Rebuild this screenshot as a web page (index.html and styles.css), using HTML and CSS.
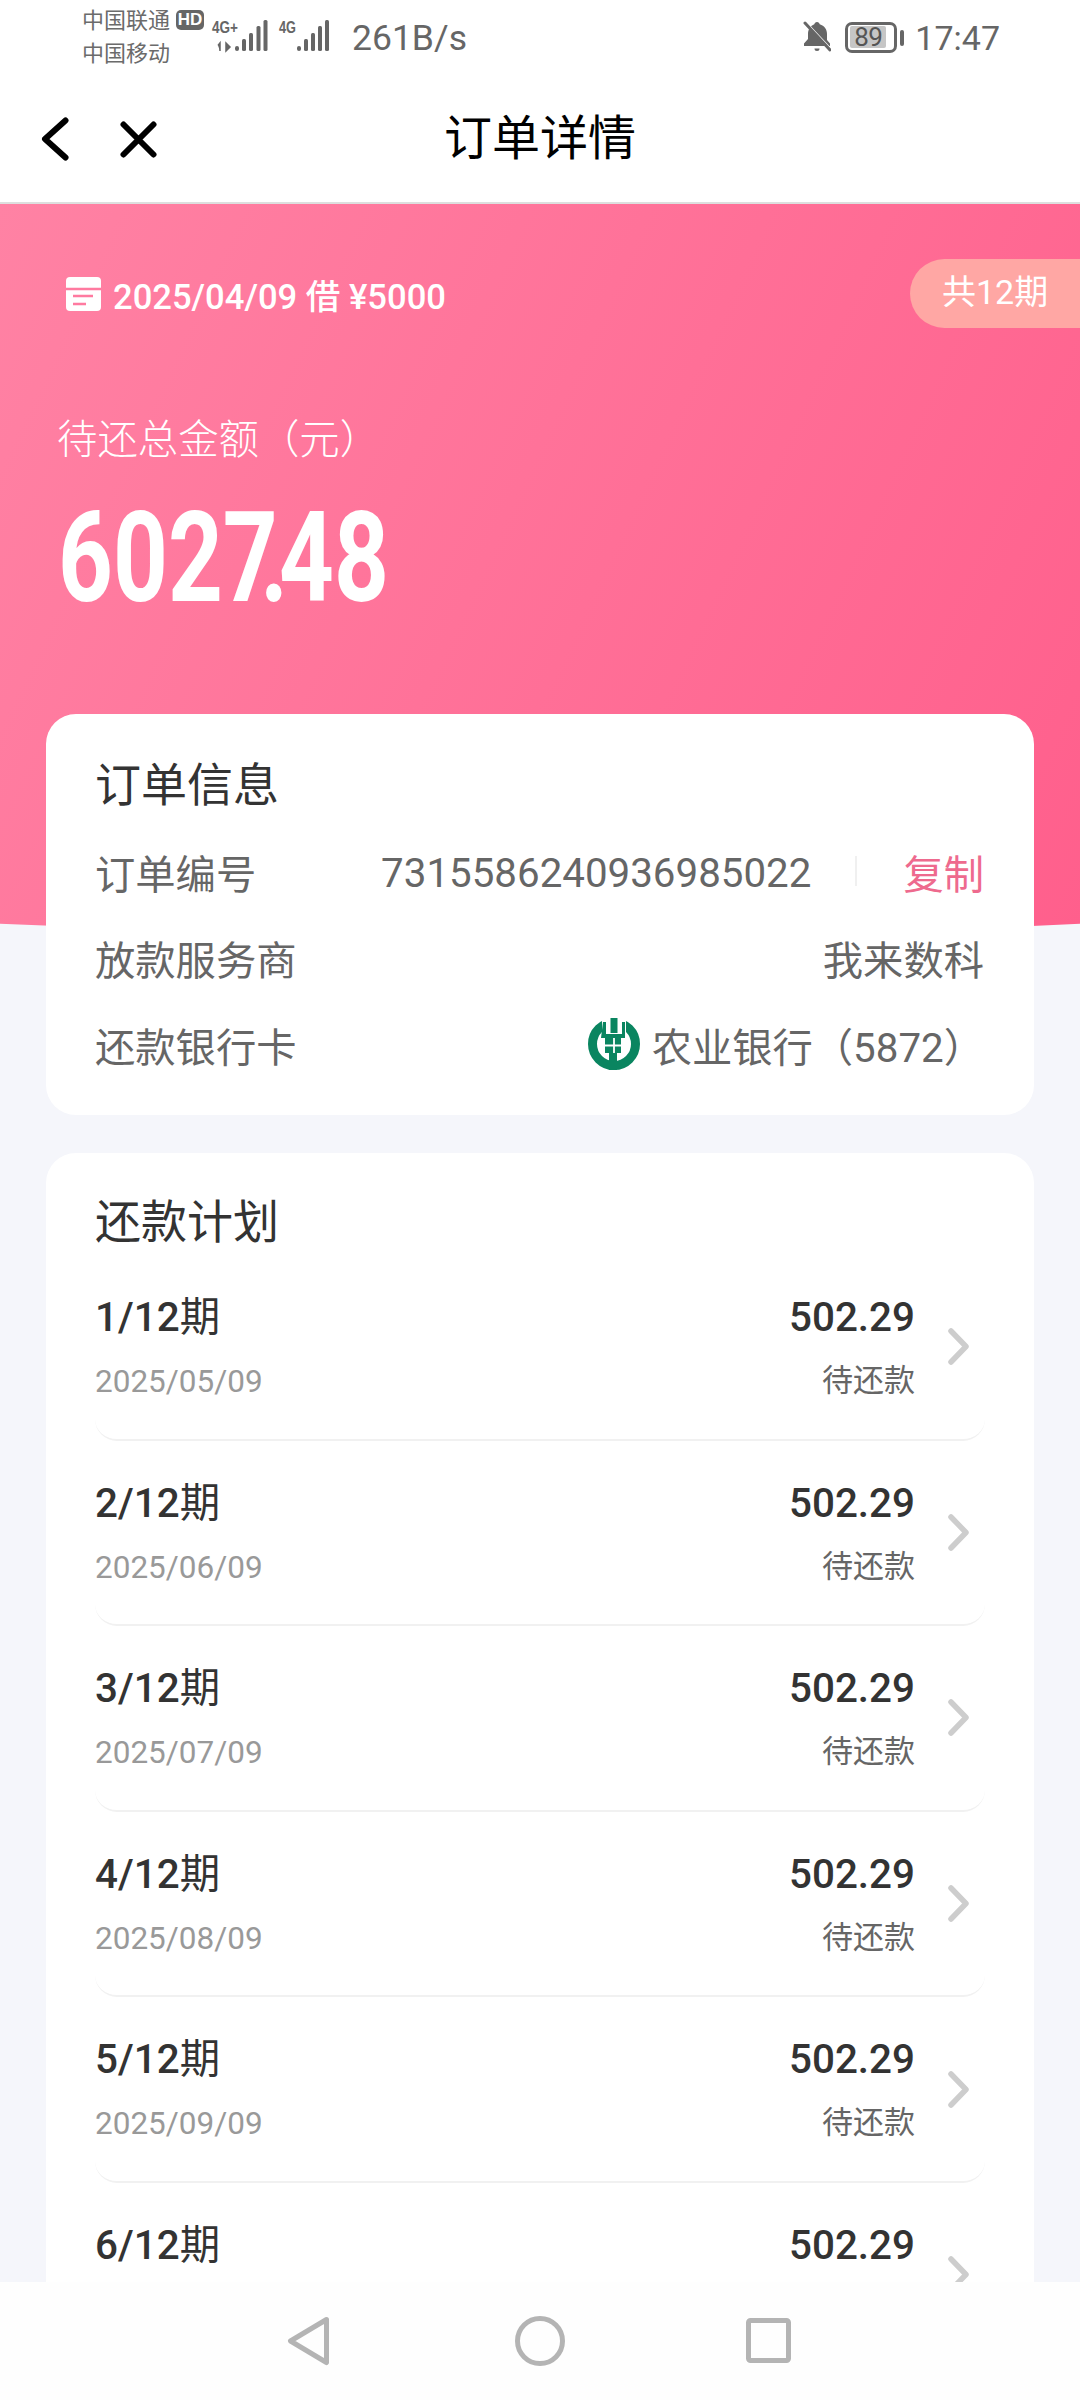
FILE: index.html
```html
<!DOCTYPE html>
<html lang="zh-CN">
<head>
<meta charset="utf-8">
<title>订单详情</title>
<link rel="stylesheet" href="styles.css">
</head>
<body>
<div class="screen">
  <header class="top">
    <div class="status">
      <div class="carriers">
        <div class="carrier">中国联通<span class="hd">HD</span></div>
        <div class="carrier">中国移动</div>
      </div>
      <svg class="signal" viewBox="205 15 130 40" width="130" height="40">
        <text class="sig-text" x="212" y="33" textLength="26" lengthAdjust="spacingAndGlyphs">4G+</text>
        <path class="sig-arrow" d="M220 51v-8l-2 2.5M226 43v8l4-4z"/>
        <rect class="sig-bar" x="235" y="46" width="4" height="5" rx="2"/>
        <rect class="sig-bar" x="242" y="39" width="4" height="12" rx="1.5"/>
        <rect class="sig-bar" x="249" y="33" width="4" height="18" rx="1.5"/>
        <rect class="sig-bar" x="256.500" y="26" width="4" height="25" rx="1.5"/>
        <rect class="sig-bar" x="263.500" y="20" width="4" height="31" rx="1.5"/>
        <text class="sig-text" x="279" y="33" textLength="17" lengthAdjust="spacingAndGlyphs">4G</text>
        <rect class="sig-bar" x="297" y="46" width="4" height="5" rx="2"/>
        <rect class="sig-bar" x="304" y="39" width="4" height="12" rx="1.5"/>
        <rect class="sig-bar" x="311" y="33" width="4" height="18" rx="1.5"/>
        <rect class="sig-bar" x="318" y="26" width="4" height="25" rx="1.5"/>
        <rect class="sig-bar" x="325" y="20" width="4" height="31" rx="1.5"/>
      </svg>
      <span class="speed">261B/s</span>
      <span class="grow"></span>
      <svg class="bell" viewBox="0 0 28 32" width="28" height="32">
        <path class="bell-body" d="M14 1c1.500 0 2.500 1 2.700 2.300C21.500 4.700 24 8.700 24 13v6l3 3.500V25H1v-2.500L5 18v-5c0-4.300 2.500-8.300 6.300-9.700C11.500 2 12.500 1 14 1z"/>
        <path class="bell-clap" d="M11.500 27.500h5a2.500 2.500 0 0 1-5 0z"/>
        <path class="bell-gap" d="M0 -1L28 29"/>
        <path class="bell-slash" d="M2 2L27 29"/>
      </svg>
      <div class="battery"><div class="battery-level">89</div></div>
      <span class="battery-nub"></span>
      <span class="clock">17:47</span>
    </div>
    <nav class="nav">
      <div class="nav-left">
        <svg class="nav-back" viewBox="0 0 28 44" width="28" height="44"><path d="M24.500 3.500L4 22l20.500 18.500"/></svg>
        <svg class="nav-close" viewBox="0 0 37 37" width="37" height="37"><path d="M3.500 3.500l30 30M33.500 3.500l-30 30"/></svg>
      </div>
      <h1 class="nav-title">订单详情</h1>
      <div></div>
    </nav>
  </header>

  <main class="content">
    <section class="hero">
      <div class="hero-top">
        <div class="loan">
          <svg class="loan-icon" viewBox="0 0 35 34" width="35" height="34">
            <rect class="loan-card" width="35" height="34" rx="4"/>
            <path class="loan-cut" d="M0 12h35M7 19h20M7 27h13"/>
          </svg>
          <span>2025/04/09 借 ¥5000</span>
        </div>
        <div class="periods">共12期</div>
      </div>
      <div class="hero-label">待还总金额（元）</div>
      <div class="hero-amount">602<span class="amount-seven">7</span><span class="amount-dot">.</span>48</div>
    </section>

    <section class="card card-info">
      <h2 class="card-title info-title">订单信息</h2>
      <div class="info-row">
        <span>订单编号</span>
        <div class="info-value">
          <span class="order-no">7315586240936985022</span>
          <i class="divider"></i>
          <span class="copy">复制</span>
        </div>
      </div>
      <div class="info-row">
        <span>放款服务商</span>
        <div class="info-value"><span>我来数科</span></div>
      </div>
      <div class="info-row">
        <span>还款银行卡</span>
        <div class="info-value bank">
          <svg class="bank-logo" viewBox="0 0 52 52" width="52" height="52">
            <circle class="bank-ring" cx="26" cy="26" r="21.500"/>
            <rect class="bank-cut" x="14" y="0" width="24" height="19"/>
            <path class="bank-green" d="M22.500 0h7v15h-7zM15 4h3v12h16V4h3v16h-4v15h-4v17h-8V35h-4V20h-4z"/>
            <path class="bank-lines" d="M17 27.500h18M26 20v15"/>
          </svg>
          <span>农业银行（5872）</span>
        </div>
      </div>
    </section>

    <section class="card card-plan">
      <h2 class="card-title plan-title">还款计划</h2>
      <div class="plan-row">
        <div class="plan-left"><div class="plan-num">1/12<span class="plan-unit">期</span></div><div class="plan-date">2025/05/09</div></div>
        <div class="plan-right"><div class="plan-amount">502.29</div><div class="plan-state">待还款</div></div>
        <svg class="plan-arrow" viewBox="0 0 21 37" width="21" height="37"><path d="M3 3l15 15.500L3 34"/></svg>
      </div>
      <div class="plan-row">
        <div class="plan-left"><div class="plan-num">2/12<span class="plan-unit">期</span></div><div class="plan-date">2025/06/09</div></div>
        <div class="plan-right"><div class="plan-amount">502.29</div><div class="plan-state">待还款</div></div>
        <svg class="plan-arrow" viewBox="0 0 21 37" width="21" height="37"><path d="M3 3l15 15.500L3 34"/></svg>
      </div>
      <div class="plan-row">
        <div class="plan-left"><div class="plan-num">3/12<span class="plan-unit">期</span></div><div class="plan-date">2025/07/09</div></div>
        <div class="plan-right"><div class="plan-amount">502.29</div><div class="plan-state">待还款</div></div>
        <svg class="plan-arrow" viewBox="0 0 21 37" width="21" height="37"><path d="M3 3l15 15.500L3 34"/></svg>
      </div>
      <div class="plan-row">
        <div class="plan-left"><div class="plan-num">4/12<span class="plan-unit">期</span></div><div class="plan-date">2025/08/09</div></div>
        <div class="plan-right"><div class="plan-amount">502.29</div><div class="plan-state">待还款</div></div>
        <svg class="plan-arrow" viewBox="0 0 21 37" width="21" height="37"><path d="M3 3l15 15.500L3 34"/></svg>
      </div>
      <div class="plan-row">
        <div class="plan-left"><div class="plan-num">5/12<span class="plan-unit">期</span></div><div class="plan-date">2025/09/09</div></div>
        <div class="plan-right"><div class="plan-amount">502.29</div><div class="plan-state">待还款</div></div>
        <svg class="plan-arrow" viewBox="0 0 21 37" width="21" height="37"><path d="M3 3l15 15.500L3 34"/></svg>
      </div>
      <div class="plan-row">
        <div class="plan-left"><div class="plan-num">6/12<span class="plan-unit">期</span></div><div class="plan-date">2025/10/09</div></div>
        <div class="plan-right"><div class="plan-amount">502.29</div><div class="plan-state">待还款</div></div>
        <svg class="plan-arrow" viewBox="0 0 21 37" width="21" height="37"><path d="M3 3l15 15.500L3 34"/></svg>
      </div>
    </section>
  </main>

  <footer class="sysnav">
    <svg class="sys-back" viewBox="0 0 44 50" width="44" height="50"><path d="M39.500 3.500L3.500 25l36 21.500z"/></svg>
    <svg class="sys-home" viewBox="0 0 50 50" width="50" height="50"><circle cx="25" cy="25" r="22.500"/></svg>
    <svg class="sys-recent" viewBox="0 0 45 45" width="45" height="45"><rect x="2.500" y="2.500" width="40" height="40" rx="2"/></svg>
  </footer>
</div>
</body>
</html>
```
FILE: styles.css
```css
* { box-sizing: border-box; }
html, body { margin: 0; padding: 0; }
body {
  width: 1080px;
  height: 2400px;
  overflow: hidden;
  background: #f5f6fb;
  font-family: Roboto, "Noto Sans CJK SC", sans-serif;
}
.screen { width: 1080px; height: 2400px; display: flex; flex-direction: column; }

/* top */
.top { flex: none; background: #fff; border-bottom: 2px solid #dedede; height: 204px; }
.status { height: 76px; display: flex; align-items: center; padding: 0 80px 0 82px; color: #666; }
.carriers { margin-bottom: 3px; }
.carrier { font-size: 22px; line-height: 33px; display: flex; align-items: center; color: #6b6b6b; }
.hd {
  margin-left: 6px; width: 28px; height: 20px; border-radius: 5px; background: #666; color: #fff;
  font: 700 17px/20px "Liberation Sans", sans-serif; text-align: center;
}
.signal { margin: 0 0 6px 1px; flex: none; }
.sig-text { font: 700 17px "Liberation Sans", sans-serif; fill: #666; }
.sig-bar { fill: #666; }
.sig-arrow { fill: #666; stroke: #666; stroke-width: 1.500; }
.speed { font-size: 35.500px; margin-left: 17px; color: #666; }
.grow { flex: 1; }
.bell { flex: none; margin-right: 14px; margin-bottom: 2px; }
.bell-body, .bell-clap { fill: #666; }
.bell-gap { stroke: #fff; stroke-width: 3; fill: none; }
.bell-slash { stroke: #666; stroke-width: 3; fill: none; stroke-linecap: round; }
.battery { width: 52px; height: 31px; border: 3px solid #666; border-radius: 7px; padding: 1px 8px 2px 2px; margin-bottom: 1px; }
.battery-level {
  height: 100%; background: #c6c6c6; border-radius: 2px; color: #555;
  font-size: 26px; line-height: 22px; text-align: center; letter-spacing: -0.500px;
}
.battery-nub { width: 4px; height: 16px; background: #666; border-radius: 2px; margin: 0 11px 1px 3px; }
.clock { font-size: 34px; color: #666; }

.nav { height: 126px; display: grid; grid-template-columns: 1fr auto 1fr; align-items: center; }
.nav-left { display: flex; align-items: center; gap: 51px; padding-left: 41px; }
.nav-back path, .nav-close path { fill: none; stroke: #000; stroke-width: 6px; stroke-linecap: round; stroke-linejoin: round; }
.nav-title { margin: 0; font-size: 48px; font-weight: 400; color: #000; line-height: 60px; }

/* content */
.content { flex: 1; min-height: 0; overflow: hidden; }
.hero {
  height: 732px;
  padding-top: 55px;
  background: linear-gradient(115deg, #ff82a4 0%, #ff5f8c 100%);
  clip-path: circle(12000px at 50% calc(100% - 12000px));
}
.hero-top { display: flex; align-items: center; justify-content: space-between; height: 69px; padding-left: 66px; }
.loan { display: flex; align-items: center; gap: 12px; color: #fff; font-size: 34.600px; font-weight: 500; }
.loan-icon { flex: none; }
.loan-card { fill: #fff; }
.loan-cut { stroke: #ff7aa0; stroke-width: 2.500; fill: none; }
.periods {
  width: 170px; height: 69px; padding-left: 32px; border-radius: 34.500px 0 0 34.500px;
  background: #ffa7a4; color: #fff; font-size: 34px; line-height: 66px; white-space: nowrap;
}
.hero-label { margin: 83px 0 0 57px; color: #fff; font-size: 40.400px; line-height: 60px; font-weight: 300; }
.hero-amount {
  margin: 28px 0 0 58px; width: max-content; color: #fff;
  font-size: 126px; line-height: 118px; font-weight: 700;
  transform: scaleX(.76); transform-origin: left center;
}
.amount-seven { letter-spacing: -23px; }
.amount-dot { letter-spacing: -12px; }

.card { position: relative; background: #fff; border-radius: 30px; margin: 0 46px; }
.card-title { margin: 0; font-size: 46px; line-height: 60px; font-weight: 400; color: #333; }
.card-info { margin-top: -222px; height: 401px; padding: 41px 50px 0 49px; }
.info-title { margin-bottom: 13px; }
.info-row {
  height: 86.500px; display: flex; align-items: center; justify-content: space-between;
  font-size: 40.300px; color: #666;
}
.info-value { display: flex; align-items: center; }
.order-no { padding-top: 5px; }
.divider { width: 2px; height: 30px; background: #f0f0f0; margin: 0 46px 0 44px; }
.copy { color: #ee6a8e; }
.bank { gap: 12px; }
.bank-logo { flex: none; }
.bank-ring { fill: none; stroke: #0a8560; stroke-width: 9; }
.bank-cut { fill: #fff; }
.bank-green { fill: #0a8560; }
.bank-lines { stroke: #fff; stroke-width: 1.800; fill: none; }

.card-plan { margin-top: 38px; padding: 39px 49px 0 49px; }
.plan-title { margin-bottom: 3px; }
.plan-row {
  display: flex; align-items: center; height: 185.600px;
  padding: 0 16px 0 0;
  border-bottom: 2px solid #f1f1f1; border-radius: 0 0 22px 22px;
}
.plan-left { flex: 1; align-self: flex-start; padding-top: 33px; }
.plan-num { font-size: 40.400px; line-height: 60px; font-weight: 500; color: #333; }
.plan-unit { font-weight: 400; }
.plan-date { margin-top: 9px; font-size: 31.500px; line-height: 50px; color: #999; }
.plan-right { align-self: flex-start; padding-top: 33px; text-align: right; }
.plan-amount { font-size: 40.400px; line-height: 60px; font-weight: 500; color: #333; }
.plan-state { margin-top: 8px; font-size: 31px; line-height: 50px; color: #666; }
.plan-arrow { flex: none; margin-left: 33px; }
.plan-arrow path { fill: none; stroke: #cdcdcd; stroke-width: 5.500px; stroke-linecap: round; stroke-linejoin: round; }

/* system nav */
.sysnav { flex: none; height: 118px; background: #fefefe; display: grid; grid-template-columns: 287px 44px 184px 50px 181px 45px; align-items: center; }
.sys-back { grid-column: 2; margin-top: -1px; }
.sys-home { grid-column: 4; margin-top: -1px; }
.sys-recent { grid-column: 6; margin-top: -1px; }
.sysnav path, .sysnav circle, .sysnav rect { fill: none; stroke: #b4b4b4; stroke-width: 5px; stroke-linejoin: round; }
```
